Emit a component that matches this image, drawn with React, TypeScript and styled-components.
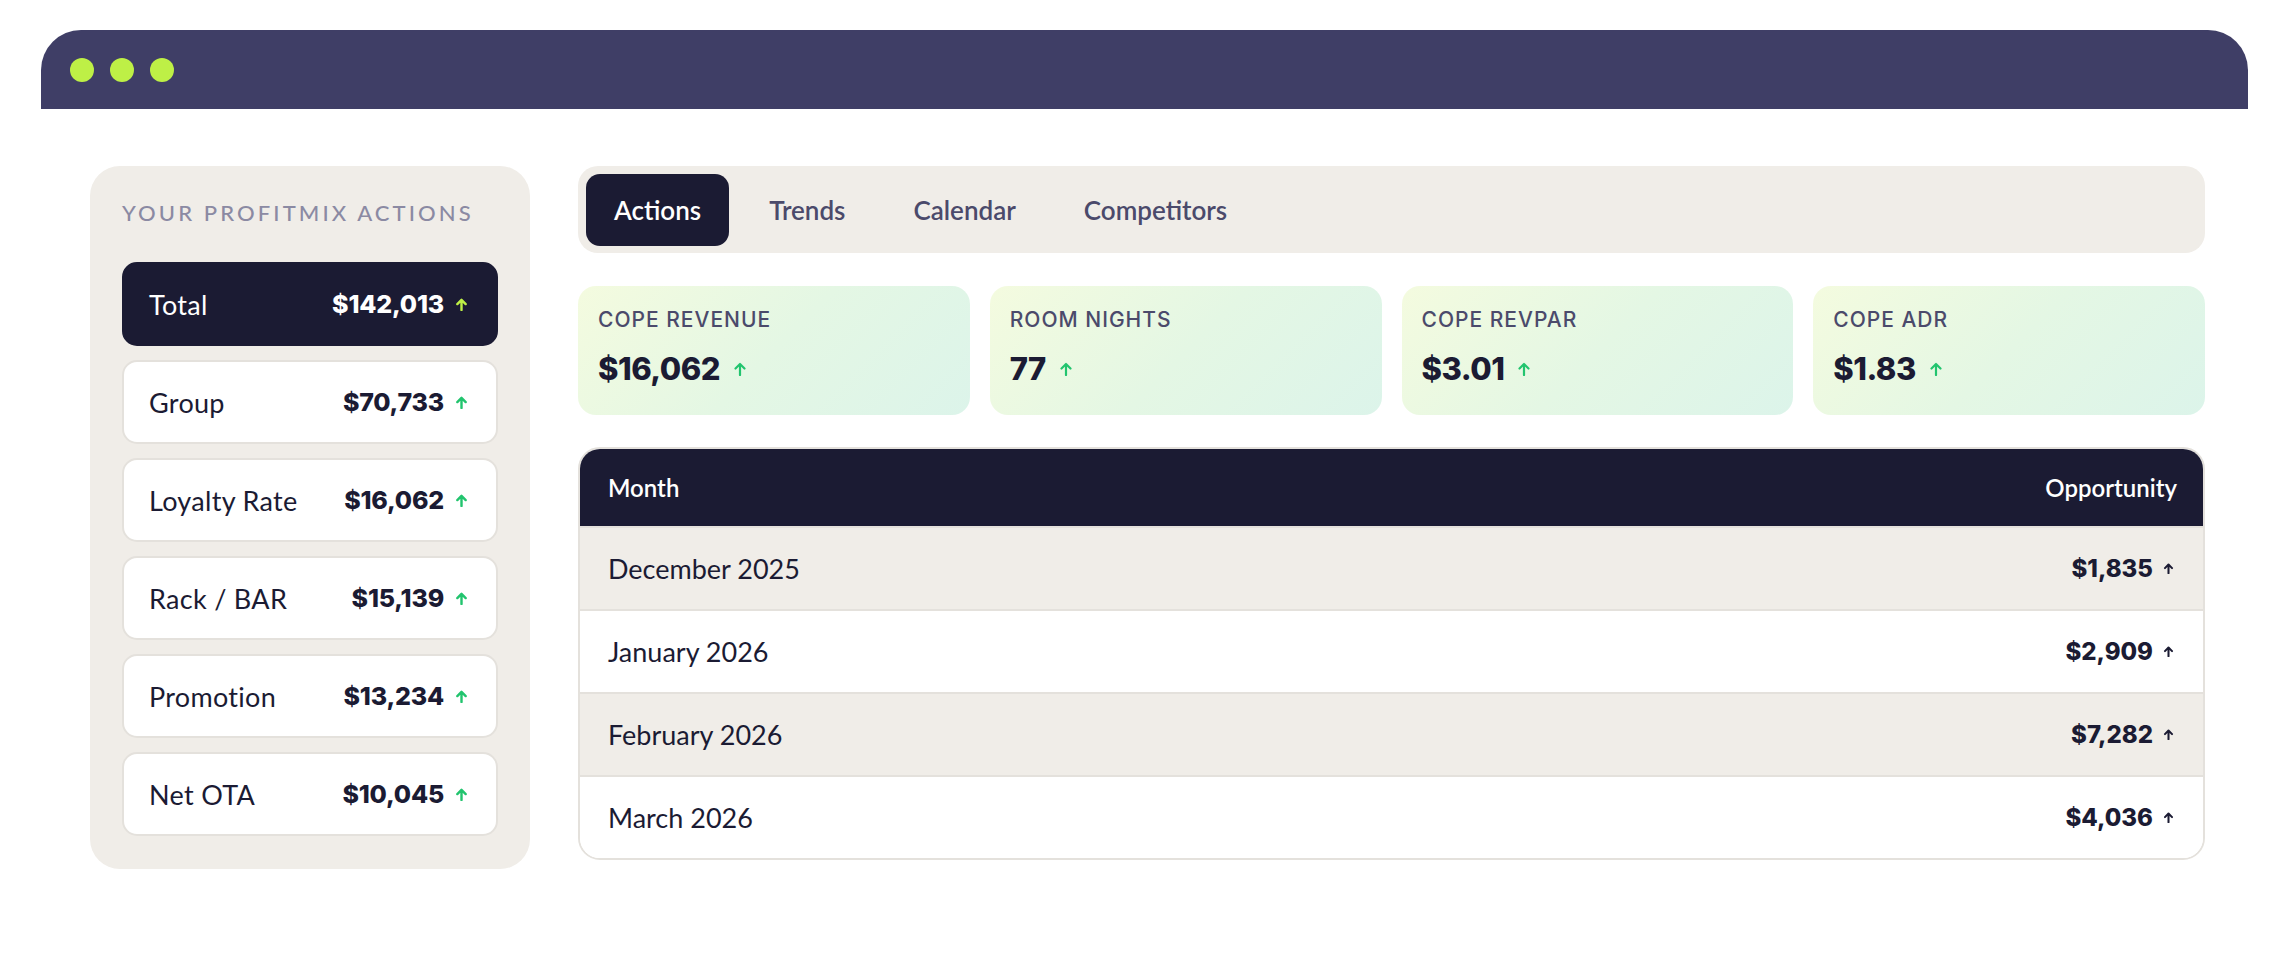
import styled, { createGlobalStyle } from "styled-components";

const GlobalStyle = createGlobalStyle`
  html, body {
    margin: 0;
    padding: 0;
    background: #ffffff;
  }
  body {
    font-family: Lato, "Open Sans", sans-serif;
    color: #1b1b33;
  }
`;

const Page = styled.div`
  padding: 30px 43px 0 41px;
`;

const TitleBar = styled.div`
  height: 79px;
  background: #3f3e66;
  border-radius: 40px 40px 0 0;
  display: flex;
  align-items: center;
  gap: 16px;
  padding-left: 29px;
`;

const Dot = styled.span`
  width: 24px;
  height: 24px;
  border-radius: 50%;
  background: #bef046;
`;

const Content = styled.div`
  display: flex;
  gap: 48px;
  padding: 57px 43px 0 49px;
`;

const SidePanel = styled.aside`
  width: 440px;
  flex-shrink: 0;
  box-sizing: border-box;
  background: #f0ede8;
  border-radius: 30px;
  padding: 34px 32px 33px;
`;

const SideHeading = styled.h3`
  margin: 0 0 36px;
  font-size: 22px;
  line-height: 26px;
  font-weight: 500;
  letter-spacing: 3.1px;
  color: #8b8aa3;
  text-transform: uppercase;
`;

const ActionList = styled.div`
  display: flex;
  flex-direction: column;
  gap: 14px;
`;

const ActionRow = styled.div<{ $active?: boolean }>`
  height: 84px;
  box-sizing: border-box;
  display: flex;
  align-items: center;
  justify-content: space-between;
  padding: 0 28px 0 25px;
  border-radius: 15px;
  background: ${(p) => (p.$active ? "#1b1b33" : "#ffffff")};
  border: 2px solid ${(p) => (p.$active ? "#1b1b33" : "#e4e1dc")};
  color: ${(p) => (p.$active ? "#ffffff" : "#1b1b33")};
`;

const ActionLabel = styled.span`
  font-size: 27px;
  font-weight: 400;
  letter-spacing: 0.3px;
`;

const ActionValue = styled.span`
  display: flex;
  align-items: center;
  gap: 11px;
  font-family: Inter, "Open Sans", sans-serif;
  font-size: 25px;
  font-weight: 800;
  letter-spacing: -0.2px;
`;

const Main = styled.section`
  flex: 1;
  min-width: 0;
  display: flex;
  flex-direction: column;
`;

const TabBar = styled.nav`
  height: 87px;
  box-sizing: border-box;
  background: #f0ede8;
  border-radius: 20px;
  padding: 0 8px;
  display: flex;
  align-items: center;
  gap: 12px;
`;

const Tab = styled.button<{ $active?: boolean }>`
  height: 72px;
  padding: 0 28px;
  border: 0;
  border-radius: 14px;
  font-family: Lato, "Open Sans", sans-serif;
  font-size: 26px;
  font-weight: 600;
  background: ${(p) => (p.$active ? "#1b1b33" : "transparent")};
  color: ${(p) => (p.$active ? "#ffffff" : "#4b4a6b")};
  cursor: pointer;
`;

const StatGrid = styled.div`
  margin-top: 33px;
  display: grid;
  grid-template-columns: repeat(4, 1fr);
  gap: 20px;
`;

const StatCard = styled.div`
  height: 129px;
  box-sizing: border-box;
  padding: 22px 20px 0;
  border-radius: 18px;
  background: linear-gradient(135deg, #f4fbdf 0%, #e4f7e4 50%, #dcf4ea 100%);
  display: flex;
  flex-direction: column;
  gap: 19px;
`;

const StatLabel = styled.span`
  font-family: Inter, "Open Sans", sans-serif;
  font-size: 21px;
  line-height: 24px;
  font-weight: 500;
  letter-spacing: 1px;
  color: #4b4a6b;
  text-transform: uppercase;
`;

const StatValue = styled.span`
  display: flex;
  align-items: center;
  gap: 13px;
  font-family: Inter, "Open Sans", sans-serif;
  font-size: 31px;
  line-height: 36px;
  font-weight: 800;
  letter-spacing: -0.5px;
  color: #1b1b33;
`;

const Table = styled.div`
  margin-top: 32px;
  border: 2px solid #e4e1dc;
  border-radius: 22px;
  overflow: hidden;
`;

const HeadRow = styled.div`
  height: 77px;
  background: #1b1b33;
  display: flex;
  align-items: center;
  justify-content: space-between;
  padding: 0 26px 0 28px;
  color: #ffffff;
  font-size: 24px;
  font-weight: 600;
`;

const BodyRow = styled.div<{ $shaded?: boolean }>`
  height: 83px;
  box-sizing: border-box;
  border-top: 2px solid #e4e1dc;
  background: ${(p) => (p.$shaded ? "#f0ede8" : "#ffffff")};
  display: flex;
  align-items: center;
  justify-content: space-between;
  padding: 0 29px 0 28px;
`;

const MonthCell = styled.span`
  font-size: 27px;
  font-weight: 400;
  color: #1b1b33;
`;

const AmountCell = styled.span`
  display: flex;
  align-items: center;
  gap: 10px;
  font-family: Inter, "Open Sans", sans-serif;
  font-size: 24px;
  font-weight: 800;
  color: #1b1b33;
`;

function UpArrow({ size, color, weight = 3.2 }: { size: number; color: string; weight?: number }) {
  return (
    <svg width={size} height={size} viewBox="0 0 14 14" fill="none">
      <path
        d="M7 13V2M2.5 6.5 7 2l4.5 4.5"
        stroke={color}
        strokeWidth={weight}
        strokeLinecap="round"
        strokeLinejoin="round"
      />
    </svg>
  );
}

const actions = [
  { label: "Total", value: "$142,013" },
  { label: "Group", value: "$70,733" },
  { label: "Loyalty Rate", value: "$16,062" },
  { label: "Rack / BAR", value: "$15,139" },
  { label: "Promotion", value: "$13,234" },
  { label: "Net OTA", value: "$10,045" },
];

const tabs = ["Actions", "Trends", "Calendar", "Competitors"];

const stats = [
  { label: "Cope Revenue", value: "$16,062" },
  { label: "Room Nights", value: "77" },
  { label: "Cope RevPAR", value: "$3.01" },
  { label: "Cope ADR", value: "$1.83" },
];

const months = [
  { month: "December 2025", amount: "$1,835" },
  { month: "January 2026", amount: "$2,909" },
  { month: "February 2026", amount: "$7,282" },
  { month: "March 2026", amount: "$4,036" },
];

export default function App() {
  return (
    <>
      <GlobalStyle />
      <Page>
        <TitleBar>
          <Dot />
          <Dot />
          <Dot />
        </TitleBar>
        <Content>
          <SidePanel>
            <SideHeading>Your ProfitMix Actions</SideHeading>
            <ActionList>
              {actions.map((a, i) => (
                <ActionRow key={a.label} $active={i === 0}>
                  <ActionLabel>{a.label}</ActionLabel>
                  <ActionValue>
                    {a.value}
                    <UpArrow size={13} color={i === 0 ? "#bef046" : "#22c46e"} weight={2.6} />
                  </ActionValue>
                </ActionRow>
              ))}
            </ActionList>
          </SidePanel>

          <Main>
            <TabBar>
              {tabs.map((t, i) => (
                <Tab key={t} $active={i === 0}>
                  {t}
                </Tab>
              ))}
            </TabBar>

            <StatGrid>
              {stats.map((s) => (
                <StatCard key={s.label}>
                  <StatLabel>{s.label}</StatLabel>
                  <StatValue>
                    {s.value}
                    <UpArrow size={14} color="#22c46e" weight={2.2} />
                  </StatValue>
                </StatCard>
              ))}
            </StatGrid>

            <Table>
              <HeadRow>
                <span>Month</span>
                <span>Opportunity</span>
              </HeadRow>
              {months.map((m, i) => (
                <BodyRow key={m.month} $shaded={i % 2 === 0}>
                  <MonthCell>{m.month}</MonthCell>
                  <AmountCell>
                    {m.amount}
                    <UpArrow size={11} color="#1b1b33" weight={2.6} />
                  </AmountCell>
                </BodyRow>
              ))}
            </Table>
          </Main>
        </Content>
      </Page>
    </>
  );
}
